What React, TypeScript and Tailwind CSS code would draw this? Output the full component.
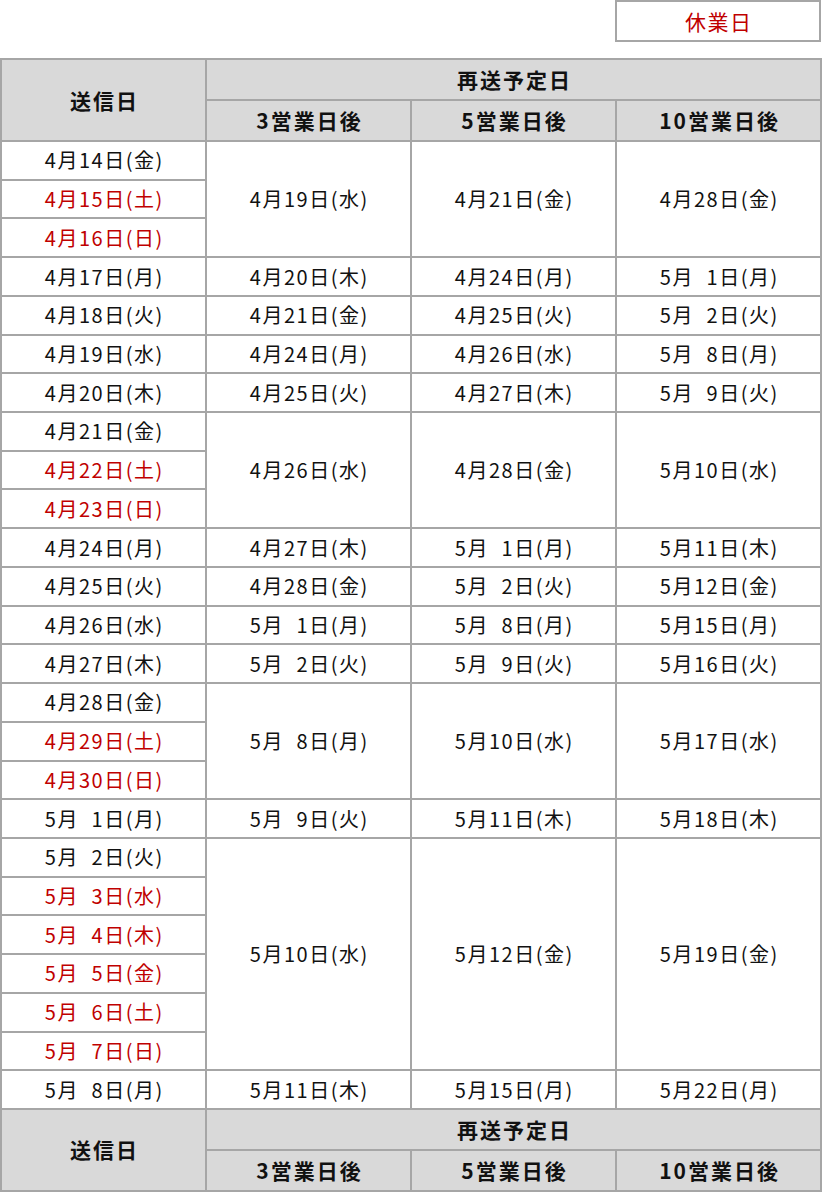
import React from "react";

type Day = { m: number; d: number; w: string; off?: boolean };
type Group = { send: Day[]; r3: Day; r5: Day; r10: Day };

const D = (m: number, d: number, w: string, off = false): Day => ({ m, d, w, off });

const groups: Group[] = [
  { send: [D(4, 14, "金"), D(4, 15, "土", true), D(4, 16, "日", true)], r3: D(4, 19, "水"), r5: D(4, 21, "金"), r10: D(4, 28, "金") },
  { send: [D(4, 17, "月")], r3: D(4, 20, "木"), r5: D(4, 24, "月"), r10: D(5, 1, "月") },
  { send: [D(4, 18, "火")], r3: D(4, 21, "金"), r5: D(4, 25, "火"), r10: D(5, 2, "火") },
  { send: [D(4, 19, "水")], r3: D(4, 24, "月"), r5: D(4, 26, "水"), r10: D(5, 8, "月") },
  { send: [D(4, 20, "木")], r3: D(4, 25, "火"), r5: D(4, 27, "木"), r10: D(5, 9, "火") },
  { send: [D(4, 21, "金"), D(4, 22, "土", true), D(4, 23, "日", true)], r3: D(4, 26, "水"), r5: D(4, 28, "金"), r10: D(5, 10, "水") },
  { send: [D(4, 24, "月")], r3: D(4, 27, "木"), r5: D(5, 1, "月"), r10: D(5, 11, "木") },
  { send: [D(4, 25, "火")], r3: D(4, 28, "金"), r5: D(5, 2, "火"), r10: D(5, 12, "金") },
  { send: [D(4, 26, "水")], r3: D(5, 1, "月"), r5: D(5, 8, "月"), r10: D(5, 15, "月") },
  { send: [D(4, 27, "木")], r3: D(5, 2, "火"), r5: D(5, 9, "火"), r10: D(5, 16, "火") },
  { send: [D(4, 28, "金"), D(4, 29, "土", true), D(4, 30, "日", true)], r3: D(5, 8, "月"), r5: D(5, 10, "水"), r10: D(5, 17, "水") },
  { send: [D(5, 1, "月")], r3: D(5, 9, "火"), r5: D(5, 11, "木"), r10: D(5, 18, "木") },
  {
    send: [D(5, 2, "火"), D(5, 3, "水", true), D(5, 4, "木", true), D(5, 5, "金", true), D(5, 6, "土", true), D(5, 7, "日", true)],
    r3: D(5, 10, "水"),
    r5: D(5, 12, "金"),
    r10: D(5, 19, "金"),
  },
  { send: [D(5, 8, "月")], r3: D(5, 11, "木"), r5: D(5, 15, "月"), r10: D(5, 22, "月") },
];

const fmt = (x: Day) => `${x.m}月${x.d < 10 ? "\u2007" + x.d : x.d}日(${x.w})`;

const cell = "border-2 border-[#a6a6a6] text-center align-middle p-0 pl-[1.5px]";
const head =
  "border-2 border-[#a6a6a6] bg-[#d9d9d9] text-center align-middle p-0 pl-[2px] font-bold text-[21px] tracking-[2px] text-[#111]";

function Header() {
  return (
    <>
      <tr className="h-[41px]">
        <th rowSpan={2} className={head}>送信日</th>
        <th colSpan={3} className={head}>再送予定日</th>
      </tr>
      <tr className="h-[41px]">
        <th className={head}>3営業日後</th>
        <th className={head}>5営業日後</th>
        <th className={head}>10営業日後</th>
      </tr>
    </>
  );
}

export default function App() {
  return (
    <div className="w-[823px] h-[1192px] bg-white text-[20px] tracking-[1.5px] text-[#111] font-['Noto_Sans_CJK_JP','Noto_Sans',sans-serif] leading-none">
      <div className="flex justify-end pr-[2px] pb-[16px]">
        <div className="w-[206px] h-[42px] border-2 border-[#a6a6a6] flex items-center justify-center pl-[1.5px] text-[#c00000] text-[21px] tracking-[1.5px]">
          休業日
        </div>
      </div>
      <table className="border-collapse table-fixed w-[822px]">
        <colgroup>
          <col className="w-[205px]" />
          <col className="w-[205px]" />
          <col className="w-[205px]" />
          <col className="w-[205px]" />
        </colgroup>
        <tbody>
          <Header />
          {groups.map((g, gi) =>
            g.send.map((s, si) => (
              <tr key={`${gi}-${si}`} className="h-[38.72px]">
                <td className={`${cell} ${s.off ? "text-[#c00000]" : ""}`}>{fmt(s)}</td>
                {si === 0 && (
                  <>
                    <td rowSpan={g.send.length} className={cell}>{fmt(g.r3)}</td>
                    <td rowSpan={g.send.length} className={cell}>{fmt(g.r5)}</td>
                    <td rowSpan={g.send.length} className={cell}>{fmt(g.r10)}</td>
                  </>
                )}
              </tr>
            ))
          )}
          <Header />
        </tbody>
      </table>
    </div>
  );
}
